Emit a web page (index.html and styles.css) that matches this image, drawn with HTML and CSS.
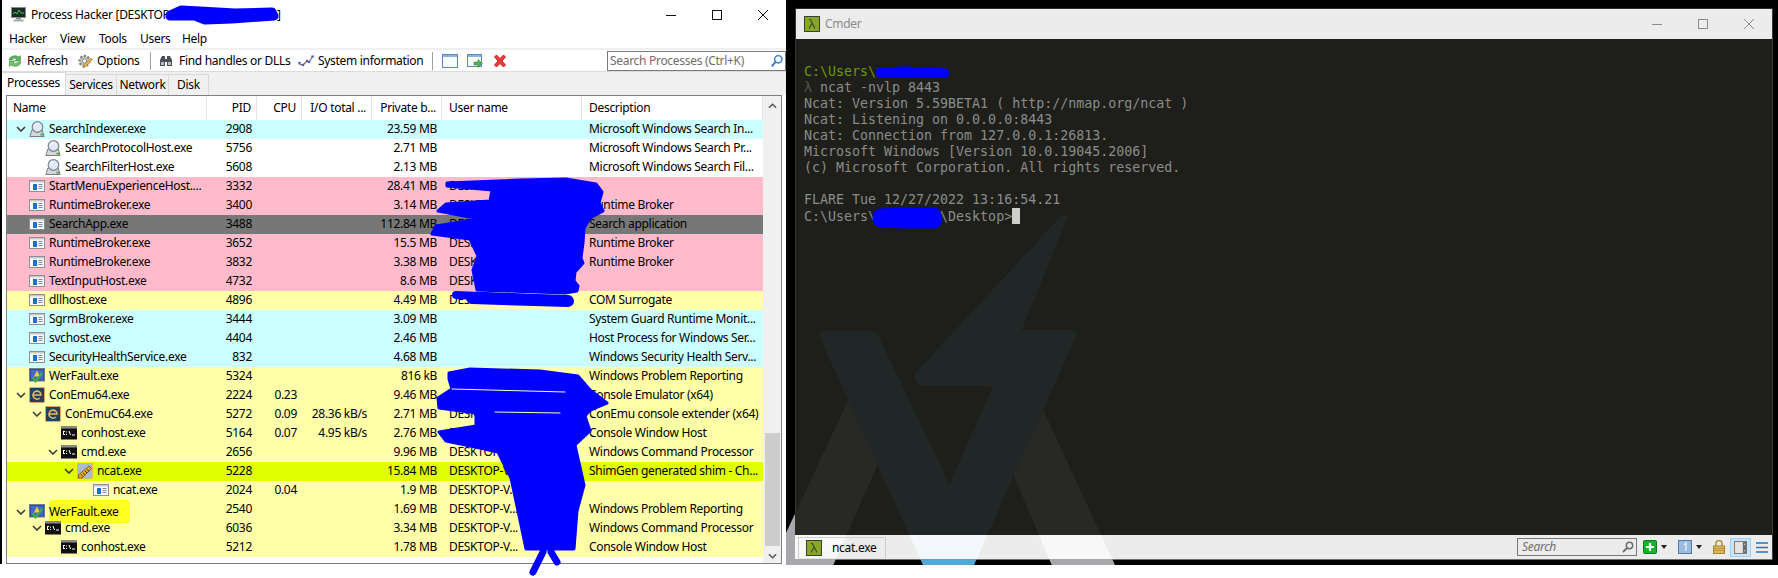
FILE: index.html
```html
<!DOCTYPE html>
<html lang="en">
<head>
<meta charset="utf-8">
<title>Process Hacker and Cmder</title>
<link rel="stylesheet" href="styles.css">
</head>
<body>
<svg class="defs" width="0" height="0" aria-hidden="true">
  <defs>
    <symbol id="chev" viewBox="0 0 10 6"><path d="M1 1l4 4 4-4" fill="none" stroke="#3c3c3c" stroke-width="1.6"/></symbol>
    <symbol id="i-app" viewBox="0 0 16 16">
      <rect x=".5" y="2.5" width="15" height="11" fill="#f7f9fb" stroke="#8d8f92"/>
      <rect x="1" y="3" width="14" height="1.4" fill="#c4c8cc"/>
      <rect x="4" y="6" width="4" height="6" fill="#1a6fd0"/>
      <path d="M9.5 6.5h4M9.5 8.5h4M9.5 10.5h4" stroke="#7a8ba0"/>
    </symbol>
    <symbol id="i-search" viewBox="0 0 16 16">
      <path d="M.8 15.5l2-6.500h10.400l2 6.500z" fill="#d4d6d8" stroke="#7c7e82" stroke-linejoin="round"/>
      <rect x="11.500" y="12.600" width="2.500" height="2" fill="#4caf3c"/>
      <circle cx="8.500" cy="6" r="5.300" fill="#dfeaf5" stroke="#7a8490" stroke-width="1.200"/>
      <path d="M5.400 5.500a3.300 3.300 0 0 1 3.200-2.800" fill="none" stroke="#fff" stroke-width="1.300"/>
    </symbol>
    <symbol id="i-wer" viewBox="0 0 16 16">
      <rect x=".5" y=".5" width="15" height="12.5" fill="#2f4ba8" stroke="#767c88"/>
      <rect x="2" y="2" width="12" height="9.5" fill="#4468c8"/>
      <path d="M8 2.5l3 6h-6z" fill="#f4d030"/>
      <path d="M3.5 9l3 4.5 7-9" fill="none" stroke="#3fb53a" stroke-width="2"/>
    </symbol>
    <symbol id="i-emu" viewBox="0 0 16 16">
      <rect x=".5" y=".5" width="15" height="15" rx="1" fill="#24405a" stroke="#e0a860"/>
      <path d="M4 8h8a4 4 0 1 0-1.2 3" fill="none" stroke="#e8b868" stroke-width="1.5"/>
    </symbol>
    <symbol id="i-cmd" viewBox="0 0 16 16">
      <rect y="1.5" width="16" height="13" fill="#101010"/>
      <rect y="1.5" width="16" height="2" fill="#8c8c8c"/>
      <path d="M2 6h2v1H2zM2 7h1v2H2zM2 9h2v1H2zM5 6.5h1v1H5zM5 9h1v1H5zM7.5 6h1l1.5 4H9zM11 9.5h3v1h-3z" fill="#fff"/>
    </symbol>
    <symbol id="i-ncat" viewBox="0 0 16 16">
      <rect x=".5" y=".5" width="15" height="15" fill="#a8bccc" stroke="#e8b848"/>
      <path d="M1.5 12L12 3l2.5 2.5L5 15H1.5z" fill="#e8a820" stroke="#4a3208" stroke-width=".6"/>
      <path d="M4 11.5l2 2M6 9.8l2 2M8 8l2 2M10 6.3l2 2" stroke="#2a1c04" stroke-width=".9"/>
    </symbol>
    <symbol id="i-lambda" viewBox="0 0 16 16">
      <rect x=".5" y=".5" width="15" height="15" fill="#86a826" stroke="#3c3f34"/>
      <path d="M5 3.5h1.4L11 12.5M8 7.5l-3 5" fill="none" stroke="#3c4a2a" stroke-width="1.2"/>
    </symbol>
  </defs>
</svg>

<div class="desktop">
  <section class="ph">
    <header class="ph-title">
      <svg class="ph-logo" viewBox="0 0 17 15"><rect x="1.5" y=".5" width="14" height="10" fill="#1c2a24" stroke="#8b8d90"/><path d="M3 7l2-2 2 2 2-4 2 3h3" fill="none" stroke="#3fd04a"/><rect x="6" y="11" width="5" height="1.5" fill="#8b8d90"/><rect x="3.5" y="12.5" width="10" height="2" fill="#a8aaad"/></svg>
      <span class="ph-name">Process Hacker [DESKTOP-VXXXXXXXXXXXXXX ]</span>
      <div class="win-btns">
        <svg class="wb" viewBox="0 0 46 16"><path d="M18 8.500h10" stroke="#111"/></svg>
        <svg class="wb" viewBox="0 0 46 16"><rect x="18.500" y="3.500" width="9" height="9" fill="none" stroke="#111"/></svg>
        <svg class="wb" viewBox="0 0 46 16"><path d="M18 3l10 10M28 3L18 13" stroke="#111" fill="none"/></svg>
      </div>
    </header>
    <nav class="ph-menu">
      <span>Hacker</span><span>View</span><span>Tools</span><span>Users</span><span>Help</span>
    </nav>
    <div class="ph-toolbar">
      <div class="tb tb-refresh">
        <svg class="ti" viewBox="0 0 16 16"><path d="M2 7a6 5 0 0 1 10-3l1.500-1.500V8H8l2-2a3.500 3 0 0 0-5 1z" fill="#5cb85c" stroke="#3f8a3f" stroke-width=".6"/><path d="M14 9a6 5 0 0 1-10 3l-1.500 1.500V8H8l-2 2a3.500 3 0 0 0 5-1z" fill="#70c46c" stroke="#3f8a3f" stroke-width=".6"/></svg>
        <span>Refresh</span>
      </div>
      <div class="tb tb-options">
        <svg class="ti" viewBox="0 0 16 16"><circle cx="7.500" cy="8" r="5" fill="#c8c8c4" stroke="#84847e" stroke-width="2.400" stroke-dasharray="2.200 1.500"/><circle cx="7.500" cy="8" r="2.200" fill="#efefec" stroke="#8c8c86"/><path d="M6 15l1-3 7-7 1.500 1.500-7 7z" fill="#e8b84c" stroke="#9a7420" stroke-width=".6"/></svg>
        <span>Options</span>
      </div>
      <i class="tb-sep sep-a"></i>
      <div class="tb tb-find">
        <svg class="ti ti-bin" viewBox="0 0 14 14"><path d="M1 6l2-4h3v3h2V2h3l2 4v6H8V8H6v4H1z" fill="#4a5058"/><path d="M2 8h3v3H2zM9 8h3v3H9z" fill="#b0bcc8"/></svg>
        <span>Find handles or DLLs</span>
      </div>
      <div class="tb tb-sys">
        <svg class="ti" viewBox="0 0 16 16"><path d="M1 11l4 1 4-4 2 1 4-6" fill="none" stroke="#c84848" stroke-width="1.200"/><g fill="#3868c8"><circle cx="1.500" cy="10" r="1.300"/><circle cx="5" cy="12" r="1.300"/><circle cx="9" cy="8" r="1.300"/><circle cx="11" cy="9" r="1.300"/><circle cx="14.500" cy="3.500" r="1.300"/></g></svg>
        <span>System information</span>
      </div>
      <i class="tb-sep sep-b"></i>
      <svg class="ti tw" viewBox="0 0 16 16"><rect x=".5" y="1.500" width="15" height="13" fill="#f8fbff" stroke="#5a88c0"/><rect x="1" y="2" width="14" height="2" fill="#8cb4e0"/></svg>
      <svg class="ti tw" viewBox="0 0 16 16"><rect x=".5" y="1.500" width="14" height="12" fill="#f8fbff" stroke="#5a88c0"/><rect x="1" y="2" width="13" height="2" fill="#8cb4e0"/><path d="M7 9h4V6.500l4.500 4-4.500 4V12H7z" fill="#58b050" stroke="#2f7a2f" stroke-width=".5"/></svg>
      <svg class="ti tw" viewBox="0 0 16 16"><path d="M2.500 4L4.500 2 8 5.500 11.500 2l2 2L10 8l3.500 4-2 2L8 10.500 4.500 14l-2-2L6 8z" fill="#e83c3c" stroke="#d02828" stroke-width="1"/></svg>
      <div class="ph-search">
        <span>Search Processes (Ctrl+K)</span>
        <svg class="ps-ico" viewBox="0 0 16 16"><circle cx="9.500" cy="6" r="4.200" fill="#eef5fc" stroke="#3478c0" stroke-width="1.600"/><path d="M6.500 9l-4.500 5" stroke="#3478c0" stroke-width="2.200"/></svg>
      </div>
    </div>
    <div class="ph-tabs">
      <span class="tab active">Processes</span><span class="tab t-serv">Services</span><span class="tab t-net">Network</span><span class="tab t-disk">Disk</span>
    </div>
    <div class="list">
      <div class="grid-wrap">
        <div class="row head">
          <div class="hname">Name</div><div class="num">PID</div><div class="num">CPU</div><div class="num">I/O total ...</div><div class="num">Private b...</div><div class="txt">User name</div><div class="txt">Description</div>
        </div>

        <div class="row svc"><div class="name d0"><svg class="chev"><use href="#chev"/></svg><svg class="ico"><use href="#i-search"/></svg><span>SearchIndexer.exe</span></div><div class="num">2908</div><div class="num"></div><div class="num"></div><div class="num">23.59 MB</div><div class="txt"></div><div class="txt">Microsoft Windows Search In...</div></div>
        <div class="row"><div class="name d1"><i class="chev"></i><svg class="ico"><use href="#i-search"/></svg><span>SearchProtocolHost.exe</span></div><div class="num">5756</div><div class="num"></div><div class="num"></div><div class="num">2.71 MB</div><div class="txt"></div><div class="txt">Microsoft Windows Search Pr...</div></div>
        <div class="row"><div class="name d1"><i class="chev"></i><svg class="ico"><use href="#i-search"/></svg><span>SearchFilterHost.exe</span></div><div class="num">5608</div><div class="num"></div><div class="num"></div><div class="num">2.13 MB</div><div class="txt"></div><div class="txt">Microsoft Windows Search Fil...</div></div>
        <div class="row imm"><div class="name d0"><i class="chev"></i><svg class="ico"><use href="#i-app"/></svg><span>StartMenuExperienceHost....</span></div><div class="num">3332</div><div class="num"></div><div class="num"></div><div class="num">28.41 MB</div><div class="txt">DESKTOP-V...</div><div class="txt"></div></div>
        <div class="row imm"><div class="name d0"><i class="chev"></i><svg class="ico"><use href="#i-app"/></svg><span>RuntimeBroker.exe</span></div><div class="num">3400</div><div class="num"></div><div class="num"></div><div class="num">3.14 MB</div><div class="txt">DESKTOP-V...</div><div class="txt">Runtime Broker</div></div>
        <div class="row susp"><div class="name d0"><i class="chev"></i><svg class="ico"><use href="#i-app"/></svg><span>SearchApp.exe</span></div><div class="num">3488</div><div class="num"></div><div class="num"></div><div class="num">112.84 MB</div><div class="txt">DESKTOP-V...</div><div class="txt">Search application</div></div>
        <div class="row imm"><div class="name d0"><i class="chev"></i><svg class="ico"><use href="#i-app"/></svg><span>RuntimeBroker.exe</span></div><div class="num">3652</div><div class="num"></div><div class="num"></div><div class="num">15.5 MB</div><div class="txt">DESKTOP-V...</div><div class="txt">Runtime Broker</div></div>
        <div class="row imm"><div class="name d0"><i class="chev"></i><svg class="ico"><use href="#i-app"/></svg><span>RuntimeBroker.exe</span></div><div class="num">3832</div><div class="num"></div><div class="num"></div><div class="num">3.38 MB</div><div class="txt">DESKTOP-V...</div><div class="txt">Runtime Broker</div></div>
        <div class="row imm"><div class="name d0"><i class="chev"></i><svg class="ico"><use href="#i-app"/></svg><span>TextInputHost.exe</span></div><div class="num">4732</div><div class="num"></div><div class="num"></div><div class="num">8.6 MB</div><div class="txt">DESKTOP-V...</div><div class="txt"></div></div>
        <div class="row own"><div class="name d0"><i class="chev"></i><svg class="ico"><use href="#i-app"/></svg><span>dllhost.exe</span></div><div class="num">4896</div><div class="num"></div><div class="num"></div><div class="num">4.49 MB</div><div class="txt">DESKTOP-V...</div><div class="txt">COM Surrogate</div></div>
        <div class="row svc"><div class="name d0"><i class="chev"></i><svg class="ico"><use href="#i-app"/></svg><span>SgrmBroker.exe</span></div><div class="num">3444</div><div class="num"></div><div class="num"></div><div class="num">3.09 MB</div><div class="txt"></div><div class="txt">System Guard Runtime Monit...</div></div>
        <div class="row svc"><div class="name d0"><i class="chev"></i><svg class="ico"><use href="#i-app"/></svg><span>svchost.exe</span></div><div class="num">4404</div><div class="num"></div><div class="num"></div><div class="num">2.46 MB</div><div class="txt"></div><div class="txt">Host Process for Windows Ser...</div></div>
        <div class="row svc"><div class="name d0"><i class="chev"></i><svg class="ico"><use href="#i-app"/></svg><span>SecurityHealthService.exe</span></div><div class="num">832</div><div class="num"></div><div class="num"></div><div class="num">4.68 MB</div><div class="txt"></div><div class="txt">Windows Security Health Serv...</div></div>
        <div class="row own"><div class="name d0"><i class="chev"></i><svg class="ico"><use href="#i-wer"/></svg><span>WerFault.exe</span></div><div class="num">5324</div><div class="num"></div><div class="num"></div><div class="num">816 kB</div><div class="txt">DESKTOP-V...</div><div class="txt">Windows Problem Reporting</div></div>
        <div class="row own"><div class="name d0"><svg class="chev"><use href="#chev"/></svg><svg class="ico"><use href="#i-emu"/></svg><span>ConEmu64.exe</span></div><div class="num">2224</div><div class="num">0.23</div><div class="num"></div><div class="num">9.46 MB</div><div class="txt">DESKTOP-V...</div><div class="txt">Console Emulator (x64)</div></div>
        <div class="row own"><div class="name d1"><svg class="chev"><use href="#chev"/></svg><svg class="ico"><use href="#i-emu"/></svg><span>ConEmuC64.exe</span></div><div class="num">5272</div><div class="num">0.09</div><div class="num">28.36 kB/s</div><div class="num">2.71 MB</div><div class="txt">DESKTOP-V...</div><div class="txt">ConEmu console extender (x64)</div></div>
        <div class="row own"><div class="name d2"><i class="chev"></i><svg class="ico"><use href="#i-cmd"/></svg><span>conhost.exe</span></div><div class="num">5164</div><div class="num">0.07</div><div class="num">4.95 kB/s</div><div class="num">2.76 MB</div><div class="txt">DESKTOP-V...</div><div class="txt">Console Window Host</div></div>
        <div class="row own"><div class="name d2"><svg class="chev"><use href="#chev"/></svg><svg class="ico"><use href="#i-cmd"/></svg><span>cmd.exe</span></div><div class="num">2656</div><div class="num"></div><div class="num"></div><div class="num">9.96 MB</div><div class="txt">DESKTOP-V...</div><div class="txt">Windows Command Processor</div></div>
        <div class="row lime"><div class="name d3"><svg class="chev"><use href="#chev"/></svg><svg class="ico"><use href="#i-ncat"/></svg><span>ncat.exe</span></div><div class="num">5228</div><div class="num"></div><div class="num"></div><div class="num">15.84 MB</div><div class="txt">DESKTOP-V...</div><div class="txt">ShimGen generated shim - Ch...</div></div>
        <div class="row own"><div class="name d4"><i class="chev"></i><svg class="ico"><use href="#i-app"/></svg><span>ncat.exe</span></div><div class="num">2024</div><div class="num">0.04</div><div class="num"></div><div class="num">1.9 MB</div><div class="txt">DESKTOP-V...</div><div class="txt"></div></div>
        <div class="row own"><div class="name d0"><svg class="chev"><use href="#chev"/></svg><svg class="ico"><use href="#i-wer"/></svg><span class="marker">WerFault.exe</span></div><div class="num">2540</div><div class="num"></div><div class="num"></div><div class="num">1.69 MB</div><div class="txt">DESKTOP-V...</div><div class="txt">Windows Problem Reporting</div></div>
        <div class="row own"><div class="name d1"><svg class="chev"><use href="#chev"/></svg><svg class="ico"><use href="#i-cmd"/></svg><span>cmd.exe</span></div><div class="num">6036</div><div class="num"></div><div class="num"></div><div class="num">3.34 MB</div><div class="txt">DESKTOP-V...</div><div class="txt">Windows Command Processor</div></div>
        <div class="row own"><div class="name d2"><i class="chev"></i><svg class="ico"><use href="#i-cmd"/></svg><span>conhost.exe</span></div><div class="num">5212</div><div class="num"></div><div class="num"></div><div class="num">1.78 MB</div><div class="txt">DESKTOP-V...</div><div class="txt">Console Window Host</div></div>
      </div>
      <div class="vscroll">
        <svg class="sb-arrow" viewBox="0 0 10 6"><path d="M1 5l4-4 4 4" fill="none" stroke="#555" stroke-width="1.600"/></svg>
        <div class="sb-track"><div class="sb-thumb"></div></div>
        <svg class="sb-arrow" viewBox="0 0 10 6"><path d="M1 1l4 4 4-4" fill="none" stroke="#555" stroke-width="1.600"/></svg>
      </div>
    </div>
  </section>

  <section class="cm-wrap">
    <svg class="cm-logo" viewBox="786 0 992 565" aria-hidden="true">
      <defs>
        <path id="lg-main" d="M1062 215q4-3 5 3L1021.700 330H1071q6 0 5 6L974 565H923L820 338q-1-7 5-7H870q6 0 8 4L949.300 484 993.300 386H922q-9-3-7-11q1-4 5-7z"/>
        <path id="lg-legs" d="M848.300 400L878.300 463.300 833.300 565H786V533zM1043.300 410L1115 565H1051.700L1013.300 475z"/>
        <clipPath id="cp-body"><rect x="795" y="39" width="977" height="496"/></clipPath>
        <clipPath id="cp-status"><rect x="795" y="535" width="977" height="24"/></clipPath>
        <clipPath id="cp-gap"><path d="M786 0H795V559H1772V565H786z"/></clipPath>
      </defs>
      <g clip-path="url(#cp-body)"><use href="#lg-legs" fill="#282825"/><use href="#lg-main" fill="#212726"/></g>
      <g clip-path="url(#cp-status)"><use href="#lg-legs" fill="#f8f8f8"/><use href="#lg-main" fill="#f4f8fc"/></g>
      <g clip-path="url(#cp-gap)"><use href="#lg-legs" fill="#a8a8ac"/><use href="#lg-main" fill="#4fa8d8"/></g>
    </svg>
    <div class="cm">
      <header class="cm-title">
        <svg class="cm-ico"><use href="#i-lambda"/></svg>
        <span class="cm-name">Cmder</span>
        <div class="win-btns cm-btns">
          <svg class="wb" viewBox="0 0 46 16"><path d="M18 8.500h10" stroke="#8a8a8a"/></svg>
          <svg class="wb" viewBox="0 0 46 16"><rect x="18.500" y="3.500" width="9" height="9" fill="none" stroke="#8a8a8a"/></svg>
          <svg class="wb" viewBox="0 0 46 16"><path d="M18 3l10 10M28 3L18 13" stroke="#8a8a8a" fill="none"/></svg>
        </div>
      </header>
      <pre class="term"><span class="g">C:\Users\xxxxxxxx</span>
<span class="l">λ</span> ncat -nvlp 8443
Ncat: Version 5.59BETA1 ( http://nmap.org/ncat )
Ncat: Listening on 0.0.0.0:8443
Ncat: Connection from 127.0.0.1:26813.
Microsoft Windows [Version 10.0.19045.2006]
(c) Microsoft Corporation. All rights reserved.

FLARE Tue 12/27/2022 13:16:54.21
C:\Users\xxxxxxxx\Desktop&gt;<i class="cursor"></i></pre>
      <footer class="cm-status">
        <div class="cm-tab"><svg class="cm-ico"><use href="#i-lambda"/></svg><span>ncat.exe</span></div>
        <div class="cm-search"><span>Search</span>
          <svg class="cs-ico" viewBox="0 0 12 12"><circle cx="7.500" cy="4.500" r="3.200" fill="none" stroke="#6e6e6e" stroke-width="1.500"/><path d="M5 7l-4 4" stroke="#6e6e6e" stroke-width="1.800"/></svg>
        </div>
        <svg class="st-btn st-plus" viewBox="0 0 14 14"><rect x=".5" y=".5" width="13" height="13" rx="1" fill="#14b22c" stroke="#0d7a1c"/><path d="M7 3v8M3 7h8" stroke="#fff" stroke-width="2.200"/></svg>
        <i class="caret"></i>
        <svg class="st-btn st-one" viewBox="0 0 14 14"><rect x=".5" y=".5" width="13" height="13" fill="#9dbcdc" stroke="#4a7ab0"/><path d="M6 5l2-2v8" fill="none" stroke="#d8e6f4" stroke-width="1.600"/></svg>
        <i class="caret"></i>
        <svg class="st-btn st-lock" viewBox="0 0 12 14"><path d="M3 6V3.500a3 3 0 0 1 6 0V6" fill="none" stroke="#b08c3c" stroke-width="1.500"/><rect x=".5" y="6" width="11" height="7.500" fill="#dab85c" stroke="#a88430"/><path d="M1 8.500h10M1 10.500h10" stroke="#b8963c"/></svg>
        <div class="st-layout"><svg viewBox="0 0 14 14"><rect x=".5" y=".5" width="13" height="13" fill="#e4e4e4" stroke="#777"/><rect x="9.500" y="1" width="4" height="12" fill="#6c6c6c"/><path d="M11 3h1v1h-1zM11 10h1v1h-1z" fill="#fff"/></svg></div>
        <svg class="st-btn st-menu" viewBox="0 0 12 11"><path d="M0 1h12M0 5.500h12M0 10h12" stroke="#1878c8" stroke-width="1.300"/></svg>
      </footer>
    </div>
  </section>
</div>

<svg class="scribble" viewBox="0 0 1778 578" aria-hidden="true">
  <g fill="none" stroke="#0000ff" stroke-linecap="round" stroke-linejoin="round">
    <path stroke-width="9" d="M170 15L181 10L200 11L235 13L272 12L274 16L232 19L205 20L195 16L170 16"/>
    <path stroke-width="9" d="M880 72L905 71L945 73L880 73"/>
    <path stroke-width="17" d="M881 217L905 216L933 216L934 220L905 220L881 219"/>
    <path fill="#0000ff" stroke-width="3" d="M447 183L520 180L566 179L596 184L602 192L599 203L603 211L590 218L584 228L583 243L581 258L583 263L575 272L574 281L578 286L577 291L565 293L477 290L473 270L478 256L470 239L432 234L436 226L480 219L438 211L446 204L490 201L492 190L447 186z"/>
    <path stroke-width="8" d="M456 295L485 296L568 300"/>
    <path stroke-width="12" d="M472 298L568 301"/>
    <path fill="#0000ff" stroke-width="3" d="M449 373L470 369L540 371L578 376L590 390L607 403L590 410L585 416L588 425L590 431L575 445L584 485L577 511L574 549L526 549L518 511L511 478L498 452L480 448L446 441L439 432L476 426L476 413L439 408L438 398L452 389L449 379z"/>
    <path stroke="#ffffaa" stroke-width="1" d="M452 389L565 392M495 412L560 413"/>
    <path stroke-width="7" d="M543 552L533 572M551 552L557 562"/>
  </g>
</svg>
</body>
</html>
```
FILE: styles.css
```css
* { box-sizing: border-box; }
html, body { margin: 0; padding: 0; background: #fff; }
body {
  width: 1778px;
  height: 578px;
  overflow: hidden;
  position: relative;
  font: 12px/16px "Noto Sans", "Open Sans", sans-serif;
  letter-spacing: -0.3px;
  color: #000;
}
.defs { position: absolute; }
.desktop { display: flex; align-items: flex-start; }

/* Process Hacker */
.ph {
  width: 786px;
  height: 564px;
  border-left: 2px solid #000;
  display: flex;
  flex-direction: column;
  background: #fff;
}
.ph-title { height: 30px; flex: none; display: flex; align-items: center; padding: 0 0 1px 8px; }
.ph-logo { width: 17px; height: 15px; flex: none; }
.ph-name { margin-left: 4px; white-space: nowrap; }
.win-btns { margin-left: auto; display: flex; }
.wb { width: 46px; height: 16px; display: block; }
.ph-menu {
  height: 18px;
  flex: none;
  display: grid;
  grid-template-columns: 51px 39px 41px 42px auto;
  padding-left: 7px;
  align-items: center;
}
.ph-toolbar {
  height: 24px;
  flex: none;
  display: flex;
  align-items: center;
  padding-left: 5px;
  border-top: 2px solid #f0f0f0;
  border-bottom: 1px solid #dcdcdc;
}
.tb { display: flex; align-items: center; gap: 4px; white-space: nowrap; flex: none; }
.tb-refresh { width: 58px; }
.tb-options { width: 62px; margin-left: 12px; }
.tb-find { width: 128px; gap: 6px; }
.tb-sys { width: 123px; margin-left: 11px; }
.ti { width: 16px; height: 16px; flex: none; display: block; }
.ti-bin { width: 14px; height: 14px; }
.tb-sep { width: 1px; height: 18px; background: #a0a0a0; flex: none; }
.sep-a { margin: 0 8px 0 11px; }
.sep-b { margin: 0 9px 0 11px; }
.tw { margin-right: 9px; }
.ph-search {
  margin-left: auto;
  width: 179px;
  height: 20px;
  border: 1px solid #7a7a7a;
  display: flex;
  align-items: center;
  padding: 0 1px 0 2px;
  color: #6d6d6d;
  white-space: nowrap;
}
.ps-ico { width: 14px; height: 14px; margin-left: auto; flex: none; }
.ph-tabs {
  height: 23px;
  flex: none;
  display: flex;
  align-items: flex-end;
  background: #f0f0f0;
}
.tab {
  height: 21px;
  padding: 2px 0 0;
  border: 1px solid #d9d9d9;
  border-bottom: 0;
  border-left: 0;
  text-align: center;
  flex: none;
}
.tab.active { width: 64px; height: 23px; background: #fff; padding-top: 2px; }
.t-serv { width: 51px; }
.t-net { width: 52px; }
.t-disk { width: 40px; }
.list {
  margin: 0 4px 0 4px;
  flex: 1;
  min-height: 0;
  border: 1px solid #7f7f7f;
  display: flex;
}
.grid-wrap { width: 756px; flex: none; }
.row {
  display: grid;
  grid-template-columns: 200px 50px 45px 70px 70px 140px 181px;
  height: 19px;
  line-height: 18px;
  white-space: nowrap;
}
.row > div { min-width: 0; }
.head { height: 24px; line-height: 23px; }
.head > div { border-right: 1px solid #e5e5e5; }
.hname { padding-left: 6px; }
.num { text-align: right; padding-right: 5px; }
.txt { padding-left: 7px; overflow: hidden; }
.name { display: flex; align-items: center; padding-bottom: 1px; }
.d1 { padding-left: 16px; }
.d2 { padding-left: 32px; }
.d3 { padding-left: 48px; }
.d4 { padding-left: 64px; }
.chev { width: 10px; height: 6px; margin: 0 3px 0 9px; flex: none; display: block; }
.ico { width: 16px; height: 16px; flex: none; display: block; margin-right: 4px; }
.svc { background: #ccffff; }
.imm { background: #ffbbcc; }
.own { background: #ffffaa; }
.lime { background: #e0ff00; }
.susp { background: #777; }
.marker { background: #ffff22; padding: 3px 12px 2px 0; border-radius: 4px; }
.vscroll {
  flex: 1;
  background: #f0f0f0;
  display: flex;
  flex-direction: column;
  align-items: center;
}
.sb-arrow { width: 9px; height: 6px; flex: none; margin: 7px 0 4px; display: block; }
.sb-track { flex: 1; width: 100%; display: flex; flex-direction: column; justify-content: flex-end; padding: 0 1px 0 2px; }
.sb-thumb { height: 113px; background: #cdcdcd; }

/* Cmder */
.cm-wrap {
  position: relative;
  width: 992px;
  height: 565px;
  background: #000;
  padding: 8px 5px 5px 9px;
  flex: none;
}
.cm-logo { position: absolute; left: 0; top: 0; width: 992px; height: 565px; z-index: 1; }
.cm {
  height: 552px;
  display: flex;
  flex-direction: column;
  border: 1px solid #333;
  border-bottom: 1px solid #6e6e6e;
  border-right-color: #3a3a3a;
  border-top-color: #2a2a2a;
}
.cm-title {
  height: 30px;
  flex: none;
  background: #ececec;
  display: flex;
  align-items: center;
  padding-left: 8px;
  color: #8a8a8a;
  position: relative;
  z-index: 2;
}
.cm-ico { width: 16px; height: 16px; flex: none; display: block; }
.cm-name { margin-left: 5px; }
.term {
  flex: 1;
  margin: 0;
  background: #1e1f1b;
  padding: 25px 8px 0;
  font: 13.300px/16px "DejaVu Sans Mono", monospace;
  letter-spacing: 0;
  color: #8c8c88;
}
.g { color: #6a9a00; }
.l { color: #55564f; }
.cursor { display: inline-block; width: 8px; height: 16px; background: #cfcfc9; vertical-align: -3px; position: relative; z-index: 2; }
.cm-status {
  height: 24px;
  flex: none;
  background: #ececec;
  display: flex;
  align-items: center;
  padding-left: 2px;
  position: relative;
}
.cm-status > * { position: relative; z-index: 2; }
.cm-tab {
  width: 88px;
  height: 22px;
  margin-top: 1px;
  border: 1px solid #cfcfcf;
  border-bottom-color: #e4e4e4;
  display: flex;
  align-items: center;
  padding-left: 7px;
  gap: 10px;
}
.cm-search {
  margin-left: auto;
  width: 120px;
  height: 18px;
  border: 1px solid #777;
  color: #6e6e6e;
  font-style: italic;
  display: flex;
  align-items: center;
  padding: 0 2px 0 4px;
}
.cs-ico { width: 12px; height: 12px; margin-left: auto; }
.st-btn { display: block; flex: none; }
.st-plus { width: 14px; height: 14px; margin-left: 6px; }
.caret { width: 0; height: 0; border: 3.500px solid transparent; border-top: 4px solid #222; border-bottom: 0; flex: none; margin: 0 11px 0 4px; }
.st-one { width: 14px; height: 14px; }
.st-lock { width: 12px; height: 14px; }
.st-layout { width: 21px; height: 19px; margin-left: 5px; background: #cce4f7; border: 1px solid #99d1ff; padding: 2px 3px; flex: none; }
.st-layout svg { width: 13px; height: 13px; display: block; }
.st-menu { width: 12px; height: 11px; margin: 0 4px 0 5px; }

.scribble { position: absolute; left: 0; top: 0; width: 1778px; height: 578px; z-index: 5; pointer-events: none; }
```
